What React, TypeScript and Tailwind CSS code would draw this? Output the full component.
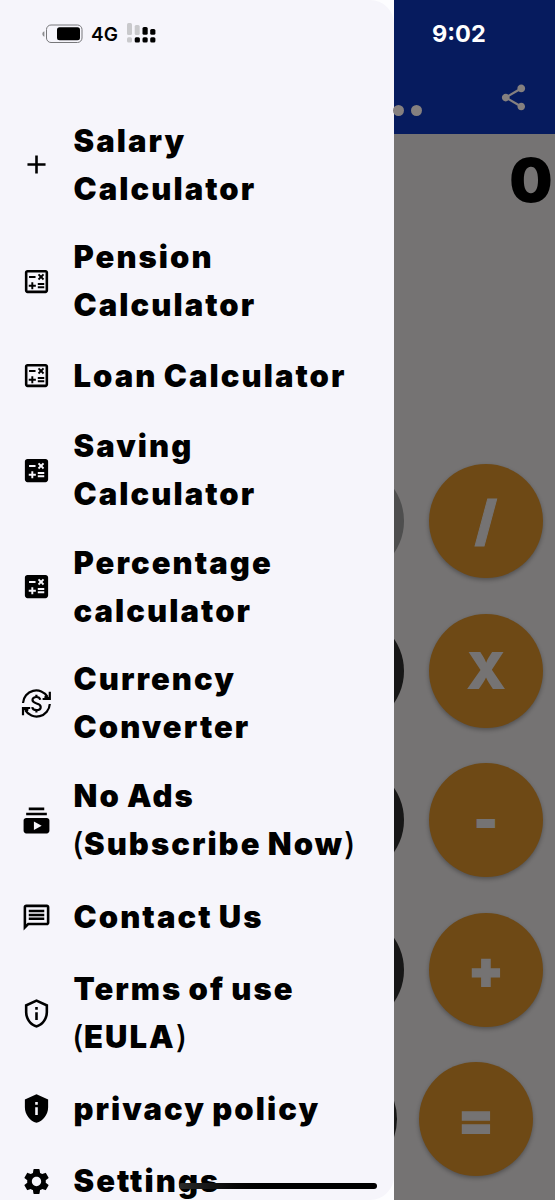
import type { ComponentType } from "react";
import {
  MdAdd,
  MdCalculate,
  MdOutlineCalculate,
  MdOutlineMessage,
  MdOutlinePrivacyTip,
  MdPrivacyTip,
  MdSettings,
  MdShare,
  MdSubscriptions,
} from "react-icons/md";

type Item = { lines: string[]; icon: ComponentType<{ className?: string }>; height: string };

function CurrencyIcon({ className }: { className?: string }) {
  return (
    <svg className={className} viewBox="0 0 31 31" fill="none" stroke="currentColor" strokeWidth="2.2">
      <path d="M2 15A13.300 13.300 0 0 1 26.600 8.800" />
      <path d="M28.800 3.800v7.200h-7.200M23.500 8.500l4.500 2" />
      <path d="M28.800 16A13.300 13.300 0 0 1 4.200 22.200" />
      <path d="M2 27.200V20h7.200M7.300 22.500l-4.500-2" />
      <path d="M19.300 11.700c-.5-1.700-1.900-2.700-3.900-2.700-2.300 0-3.900 1.200-3.900 3.100 0 4.400 8.200 2.300 8.200 6.800 0 2-1.700 3.200-4.200 3.200-2.300 0-4-1.100-4.300-3M15.400 6.700V9M15.400 22v2.500" />
    </svg>
  );
}

const items: Item[] = [
  { lines: ["Salary", "Calculator"], icon: MdAdd, height: "h-[116.7px]" },
  { lines: ["Pension", "Calculator"], icon: MdOutlineCalculate, height: "h-[116.7px]" },
  { lines: ["Loan Calculator"], icon: MdOutlineCalculate, height: "h-[72px]" },
  { lines: ["Saving", "Calculator"], icon: MdCalculate, height: "h-[116.7px]" },
  { lines: ["Percentage", "calculator"], icon: MdCalculate, height: "h-[116.7px]" },
  { lines: ["Currency", "Converter"], icon: CurrencyIcon, height: "h-[116.7px]" },
  { lines: ["No Ads", "(Subscribe Now)"], icon: MdSubscriptions, height: "h-[117.2px]" },
  { lines: ["Contact Us"], icon: MdOutlineMessage, height: "h-[76px]" },
  { lines: ["Terms of use", "(EULA)"], icon: MdOutlinePrivacyTip, height: "h-[116.2px]" },
  { lines: ["privacy policy"], icon: MdPrivacyTip, height: "h-[75px]" },
  { lines: ["Settings"], icon: MdSettings, height: "h-[70px]" },
];

function StatusIcons() {
  return (
    <div className="flex h-[67px] shrink-0 items-center pl-[42px]">
      <svg className="h-5 w-[42px] shrink-0" viewBox="0 0 42 20">
        <path d="M2.4 7.3v5.4C1 12.2.4 11.2.4 10s.6-2.200 2-2.700z" fill="#8b8b8e" />
        <rect x="4.500" y="1" width="35.500" height="17.500" rx="4.500" fill="none" stroke="#77777a" />
        <rect x="15" y="3.300" width="23" height="13" rx="2.500" fill="#000" />
      </svg>
      <span className="ml-[7px] w-[28px] pt-px text-[19px] font-semibold leading-none">4G</span>
      <svg className="ml-[7px] h-6 w-[31px] shrink-0" viewBox="0 0 31 24">
        <g fill="#c9c9cc">
          <rect x="1" y="1" width="5" height="12" rx="1.500" />
          <rect x="8.700" y="3" width="5" height="10" rx="1.500" />
          <rect x="1" y="15.300" width="5" height="5.200" rx="1.500" />
        </g>
        <g fill="#000">
          <rect x="16.500" y="5" width="5.200" height="7.800" rx="1.500" />
          <rect x="24.200" y="7" width="5.200" height="5.800" rx="1.500" />
          <rect x="8.700" y="15.300" width="5.200" height="5.200" rx="1.500" />
          <rect x="16.500" y="15.300" width="5.200" height="5.200" rx="1.500" />
          <rect x="24.200" y="15.300" width="5.200" height="5.200" rx="1.500" />
        </g>
      </svg>
    </div>
  );
}

function Label({ text }: { text: string }) {
  if (!text.startsWith("(")) return <div className="whitespace-nowrap">{text}</div>;
  return (
    <div className="-ml-[1.500px] whitespace-nowrap">
      <span className="font-medium tracking-[0.5px]">(</span>
      {text.slice(1, -1)}
      <span className="font-medium">)</span>
    </div>
  );
}

function Drawer() {
  return (
    <nav className="w-[394px] shrink-0 bg-[#fdfdff]">
      <div className="flex h-[1200px] flex-col overflow-hidden rounded-r-[24px] bg-[#f6f5fb]">
        <StatusIcons />
        <ul className="pt-[39.400px]">
          {items.map(({ lines, icon: Icon, height }) => (
            <li key={lines.join(" ")} className={`flex items-center ${height}`}>
              <Icon className="ml-[21px] mr-[21.500px] size-[31px] shrink-0" />
              <div className="text-[31px] font-black leading-[48px] tracking-[2.05px] [word-spacing:-2px]">
                {lines.map((line) => (
                  <Label key={line} text={line} />
                ))}
              </div>
            </li>
          ))}
        </ul>
      </div>
    </nav>
  );
}

const operators = [
  { label: "/", glyph: "text-[54px] [-webkit-text-stroke:1px_#757373]" },
  { label: "X", glyph: "text-[51px]" },
  { label: "-", glyph: "text-[48px] [-webkit-text-stroke:2px_#757373]" },
  { label: "+", glyph: "text-[51px] [-webkit-text-stroke:1.5px_#757373]" },
];

function Key({ label, glyph }: { label: string; glyph: string }) {
  return (
    <div
      className={`flex size-[114px] shrink-0 items-center justify-center rounded-full bg-[#6e4915] font-black leading-none text-[#757373] shadow-[0_2px_4px_rgba(0,0,0,0.3)] ${glyph}`}
    >
      {label}
    </div>
  );
}

function Calculator() {
  return (
    <main className="flex min-w-0 flex-1 flex-col bg-[#757373]">
      <header className="flex h-[133.500px] shrink-0 flex-col bg-[#061b5e]">
        <time className="pl-[38px] pt-[20px] text-[23.500px] font-bold leading-[28px] text-white">9:02</time>
        <div className="flex pt-[34px]">
          <div className="flex w-[28px] justify-end gap-[7px] pt-[23px]">
            <i className="size-[11px] shrink-0 rounded-full bg-[#85807f]" />
            <i className="size-[11px] shrink-0 rounded-full bg-[#85807f]" />
          </div>
          <MdShare className="ml-[76px] size-[31px] text-[#85807f]" />
        </div>
      </header>
      <div className="flex h-[330.500px] shrink-0 justify-end pr-[2.500px] pt-[12px] text-[61px] font-black leading-[68px]">
        0
      </div>
      {operators.map(({ label, glyph }, i) => (
        <div key={label} className="flex h-[149.500px] shrink-0 justify-between pr-[12px]">
          <div className="flex w-[10px] justify-end overflow-hidden">
            <div className={`size-[114px] shrink-0 rounded-full ${i === 0 ? "bg-[#4e4e4e]" : "bg-[#171717]"}`} />
          </div>
          <Key label={label} glyph={glyph} />
        </div>
      ))}
      <div className="flex h-[138px] shrink-0 justify-between pr-[22px]">
        <div className="flex w-[3px] justify-end overflow-hidden">
          <div className="size-[114px] shrink-0 rounded-full bg-[#171717]" />
        </div>
        <Key label="=" glyph="text-[51px] [-webkit-text-stroke:1.5px_#757373]" />
      </div>
    </main>
  );
}

export default function App() {
  return (
    <div className="relative flex h-[1200px] w-[555px] overflow-hidden font-['Inter',sans-serif] text-black">
      <Drawer />
      <Calculator />
      <div className="absolute bottom-[11px] left-[179px] h-[6px] w-[198px] rounded-full bg-gradient-to-r from-[#2b2b2b] via-black to-black" />
    </div>
  );
}
